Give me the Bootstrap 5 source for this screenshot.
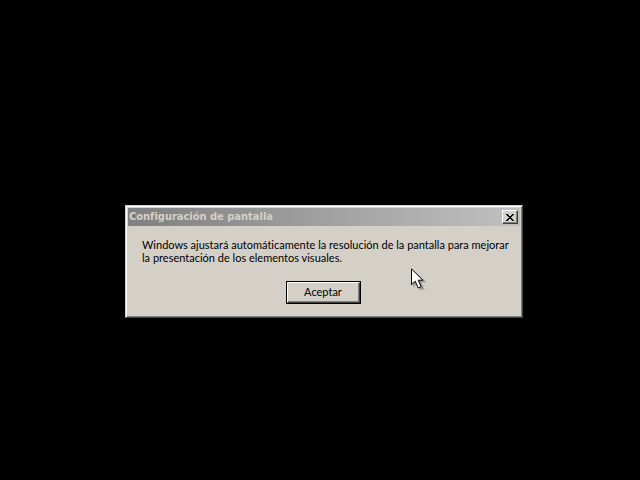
<!DOCTYPE html>
<html lang="es">
<head>
<meta charset="utf-8">
<meta name="viewport" content="width=device-width, initial-scale=1">
<title>Configuración de pantalla</title>
<link href="https://cdn.jsdelivr.net/npm/bootstrap@5.3.0/dist/css/bootstrap.min.css" rel="stylesheet">
<style>
body { background: #000; color: #000; font: 11px/13px Lato, Tahoma, sans-serif; font-variant-ligatures: none; }
.desktop { padding: 43px 0 0 8px; }
.dialog-box { width: 398px; max-width: 100%; padding: 1px; background: #d4d0c8; border: 1px solid; border-color: #d4d0c8 #404040 #404040 #d4d0c8; box-shadow: inset 1px 1px #fff, inset -1px -1px #808080; }
.dialog-inner { padding: 1px; }
.title-strip { height: 18px; padding: 0 2px 0 1px; background: linear-gradient(90deg, #808080, #c0c0c0); color: #d4d0c8; }
.title-strip h1 { font: 700 11px/18px "DejaVu Sans Condensed", Tahoma, sans-serif; }
.bevel { background: #d4d0c8; border: 1px solid; border-color: #fff #404040 #404040 #fff; box-shadow: inset -1px -1px #808080; color: #000; }
.close-btn { width: 16px; height: 14px; }
.message { padding: 12px 8px 17px 14px; }
.actions { padding: 0 2px 11px 0; }
.ok-frame { border: 1px solid #000; }
.ok-btn { width: 73px; height: 21px; padding: 0 0 2px; }
.pointer { left: 285px; top: 62px; }
</style>
</head>
<body>
<main class="desktop min-vh-100 d-flex align-items-center justify-content-center">
  <section class="dialog-box position-relative" role="dialog" aria-labelledby="dlg-title" aria-describedby="dlg-text">
    <div class="dialog-inner">
      <header class="title-strip d-flex align-items-center justify-content-between">
        <h1 id="dlg-title" class="m-0 text-nowrap">Configuración de pantalla</h1>
        <button type="button" class="bevel close-btn p-0 d-flex align-items-center justify-content-center" aria-label="Cerrar">
          <svg width="8" height="7" viewBox="0 0 8 7" shape-rendering="crispEdges" aria-hidden="true"><path d="M0 0h2v1h1v1h2V1h1V0h2v1H7v1H6v1H5v1h1v1h1v1h1v1H6V6H5V5H3v1H2v1H0V6h1V5h1V4h1V3H2V2H1V1H0z"/></svg>
        </button>
      </header>
      <p id="dlg-text" class="message m-0">Windows ajustará automáticamente la resolución de la pantalla para mejorar la presentación de los elementos visuales.</p>
      <div class="actions d-flex justify-content-center">
        <div class="ok-frame"><button type="button" class="bevel ok-btn d-block">Aceptar</button></div>
      </div>
    </div>
    <svg class="pointer position-absolute pe-none" width="18" height="26" viewBox="0 0 18 26" aria-hidden="true">
      <path d="M3 3v17l4-4 3 7 4-1-3-7h5z" fill="#000" opacity=".08"/>
      <path d="M2 2v17l4-4 3 7 4-1-3-7h5z" fill="#000" opacity=".22"/>
      <path d="M.5 .8v15.9l3.700-3.500 3 6.800 3-1.300-3-6.500h4.700z" fill="#fff" stroke="#000"/>
    </svg>
  </section>
</main>
<script src="https://cdn.jsdelivr.net/npm/bootstrap@5.3.0/dist/js/bootstrap.bundle.min.js"></script>
</body>
</html>
